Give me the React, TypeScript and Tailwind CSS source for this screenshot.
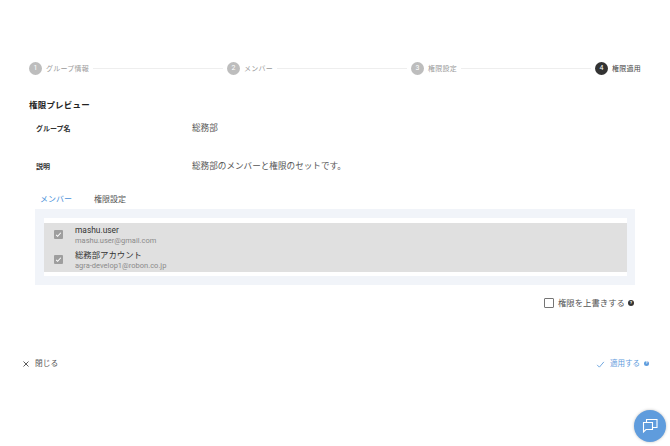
import React from "react";

const font = { fontFamily: '"Roboto", "Noto Sans CJK JP", sans-serif' };

function Step({ n, label, active }: { n: number; label: string; active?: boolean }) {
  return (
    <div className="flex items-center shrink-0">
      <div className={`w-[13px] h-[13px] rounded-full flex items-center justify-center text-[7px] text-white ${active ? "bg-[#333333]" : "bg-[#bdbdbd]"}`}>{n}</div>
      <span className={`ml-[4px] text-[7px] leading-[12px] tracking-[0.25px] ${active ? "text-[#444444]" : "text-[#9a9a9a]"}`}>{label}</span>
    </div>
  );
}

function Line() {
  return <div className="flex-1 h-px bg-[#eeeeee] mx-[4px]" />;
}

function Member({ name, mail }: { name: string; mail: string }) {
  return (
    <div className="flex items-center h-[24.5px]">
      <div className="ml-[10px] w-[9px] h-[9px] rounded-[1px] bg-[#9e9e9e] flex items-center justify-center">
        <svg width="7" height="7" viewBox="0 0 24 24" fill="none" stroke="#ffffff" strokeWidth="3.5"><path d="M4 13l5 5L20 6" /></svg>
      </div>
      <div className="ml-[12px] mt-[2px] flex flex-col">
        <span className="text-[8.4px] leading-[11px] text-[#333333]">{name}</span>
        <span className="text-[7.5px] leading-[10px] text-[#8a8a8a]">{mail}</span>
      </div>
    </div>
  );
}

export default function App() {
  return (
    <div className="relative w-[670px] h-[446px] bg-white overflow-hidden flex flex-col" style={font}>
      <div className="flex items-center ml-[29px] mr-[29px] mt-[62px] h-[13px]">
        <Step n={1} label="グループ情報" />
        <Line />
        <Step n={2} label="メンバー" />
        <Line />
        <Step n={3} label="権限設定" />
        <Line />
        <Step n={4} label="権限適用" active />
      </div>

      <h2 className="ml-[29px] mt-[24px] text-[8.5px] leading-[13px] font-bold text-[#222222] tracking-[0.2px]">権限プレビュー</h2>

      <div className="flex ml-[36px] mt-[10px] h-[13px] items-center">
        <span className="w-[156px] mt-[1px] text-[7px] font-bold text-[#333333]">グループ名</span>
        <span className="text-[8.6px] text-[#555555] -mt-[1px]">総務部</span>
      </div>
      <div className="flex ml-[36px] mt-[25px] h-[13px] items-center">
        <span className="w-[156px] mt-[1px] text-[7px] font-bold text-[#333333]">説明</span>
        <span className="text-[8.6px] text-[#555555] -mt-[1px]">総務部のメンバーと権限のセットです。</span>
      </div>

      <div className="flex ml-[40px] mt-[19px] h-[16px] items-center">
        <span className="text-[8px] text-[#4a90d9]">メンバー</span>
        <span className="ml-[22px] text-[8px] text-[#555555]">権限設定</span>
      </div>

      <div className="ml-[35px] mr-[35px] mt-[1px] h-[76px] bg-[#f1f4f9] pt-[9px] pl-[9px] pr-[8px]">
        <div className="bg-white py-[4.5px]">
          <div className="bg-[#e0e0e0]">
            <Member name="mashu.user" mail="mashu.user@gmail.com" />
            <Member name="総務部アカウント" mail="agra-develop1@robon.co.jp" />
          </div>
        </div>
      </div>

      <div className="flex items-center justify-end mr-[36px] mt-[12px] h-[12px]">
        <div className="w-[10px] h-[10px] border border-[#757575] rounded-[1px]" />
        <span className="ml-[4px] text-[8.4px] text-[#555555]">権限を上書きする</span>
        <div className="ml-[3px] w-[6px] h-[6px] rounded-full bg-[#333333] flex items-center justify-center text-[4px] text-white font-bold">?</div>
      </div>

      <div className="flex items-center justify-between ml-[23px] mr-[21px] mt-[48px] h-[14px]">
        <div className="flex items-center">
          <svg width="6" height="6" viewBox="0 0 24 24" fill="none" stroke="#444444" strokeWidth="3.5"><path d="M2 2l20 20M22 2L2 22" /></svg>
          <span className="ml-[6px] text-[7.7px] text-[#555555]">閉じる</span>
        </div>
        <div className="flex items-center">
          <svg width="9" height="9" viewBox="0 0 24 24" fill="none" stroke="#6ba3de" strokeWidth="2.5"><path d="M3 13l6 6L21 5" /></svg>
          <span className="ml-[5px] text-[7.5px] text-[#5f9cdd]">適用する</span>
          <div className="ml-[4px] -mt-[2px] w-[5px] h-[5px] rounded-full bg-[#5f9cdd] flex items-center justify-center text-[4px] text-white font-bold">?</div>
        </div>
      </div>

      <div className="absolute left-[634px] top-[410px] w-[32px] h-[32px] rounded-full bg-[#5f9cdd] flex items-center justify-center shadow-[0_0_3px_rgba(0,0,0,0.25)]">
        <svg width="16" height="16" viewBox="0 0 16 16" fill="none" stroke="#ffffff" strokeWidth="1.1">
          <path d="M1.5 4.5h9v7H4L1.5 14z" />
          <path d="M4.5 4.5V1.5H15v8h-4.5" />
        </svg>
      </div>
    </div>
  );
}
